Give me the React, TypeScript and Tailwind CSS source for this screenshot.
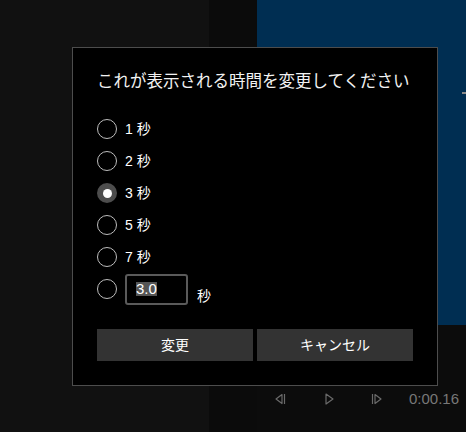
import React from "react";

const jp = { fontFamily: '"Liberation Sans", "Noto Sans CJK JP", sans-serif' };

const options = ["1 秒", "2 秒", "3 秒", "5 秒", "7 秒"];

function Radio({ checked }: { checked?: boolean }) {
  if (checked) {
    return (
      <span className="flex h-5 w-5 shrink-0 items-center justify-center rounded-full bg-[#4d4d4d]">
        <span className="h-[9px] w-[9px] rounded-full bg-white" />
      </span>
    );
  }
  return <span className="h-5 w-5 shrink-0 rounded-full border-[1.5px] border-[#bdbdbd]" />;
}

function PrevIcon() {
  return (
    <svg width="11" height="12" viewBox="0 0 11 12" fill="none" stroke="#6a6a6a" strokeWidth="1.2">
      <path d="M7 1.5 L1 6 L7 10.5 Z" strokeLinejoin="round" />
      <path d="M9.5 1 V11" />
    </svg>
  );
}

function PlayIcon() {
  return (
    <svg width="9" height="12" viewBox="0 0 9 12" fill="none" stroke="#6a6a6a" strokeWidth="1.2">
      <path d="M1 1 L8 6 L1 11 Z" strokeLinejoin="round" />
    </svg>
  );
}

function NextIcon() {
  return (
    <svg width="11" height="12" viewBox="0 0 11 12" fill="none" stroke="#6a6a6a" strokeWidth="1.2">
      <path d="M1.5 1 V11" />
      <path d="M4 1.5 L10 6 L4 10.5 Z" strokeLinejoin="round" />
    </svg>
  );
}

export default function App() {
  return (
    <div className="relative flex h-[432px] w-[466px] overflow-hidden bg-[#111111]" style={jp}>
      <div className="w-[209px] bg-[#111111]" />
      <div className="w-[48px] bg-[#0b0b0b]" />
      <div className="flex w-[209px] flex-col">
        <div className="h-[325px] bg-[#002e52]" />
        <div className="flex flex-1 items-start bg-[#0c0c0c] pt-[68px]">
          <div className="ml-[18px] flex h-3 items-center">
            <PrevIcon />
          </div>
          <div className="ml-[39px] flex h-3 items-center">
            <PlayIcon />
          </div>
          <div className="ml-[37px] flex h-3 items-center">
            <NextIcon />
          </div>
          <span className="ml-[27px] -mt-[3px] text-[15px] leading-[18px] text-[#787878]">0:00.16</span>
        </div>
      </div>

      <div className="absolute left-[462px] top-[92px] h-[2px] w-[4px] bg-[#8a8a8a]" />

      <div className="absolute left-[72px] top-[47px] flex h-[339px] w-[366px] flex-col border border-white/30 bg-black px-6 pt-5">
        <h1
          className="whitespace-nowrap text-[16.5px] leading-6 font-normal text-[#f2f2f2]"
          style={{ fontFamily: '"Noto Sans CJK JP", sans-serif' }}
        >
          これが表示される時間を変更してください
        </h1>

        <div className="mt-[21px] flex flex-col">
          {options.map((o, i) => (
            <div key={o} className="flex h-8 items-center gap-2">
              <Radio checked={i === 2} />
              <span className="text-[14px] text-white">{o}</span>
            </div>
          ))}
          <div className="flex h-8 items-center">
            <Radio />
            <div className="ml-2 flex h-[31px] w-[63px] items-center rounded-[3px] border-2 border-[#5a5a5a] pl-[9px]">
              <span className="bg-[#555555] text-[15px] leading-[14px] text-white">3.0</span>
            </div>
            <span className="ml-[9px] mt-[14px] text-[14px] text-white">秒</span>
          </div>
        </div>

        <div className="mt-6 flex gap-1">
          <button className="h-8 flex-1 bg-[#333333] text-[14px] text-white">変更</button>
          <button className="h-8 flex-1 bg-[#333333] text-[14px] text-white">キャンセル</button>
        </div>
      </div>
    </div>
  );
}
